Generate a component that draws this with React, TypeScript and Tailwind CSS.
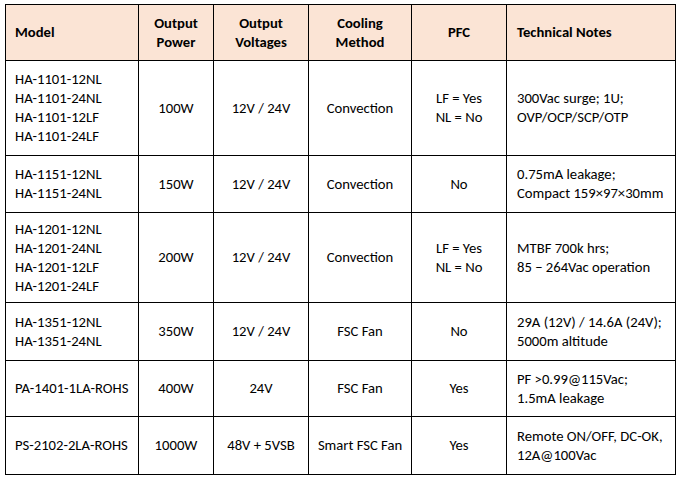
import React from "react";

const header = [
  { lines: ["Model"], align: "left" },
  { lines: ["Output", "Power"], align: "center" },
  { lines: ["Output", "Voltages"], align: "center" },
  { lines: ["Cooling", "Method"], align: "center" },
  { lines: ["PFC"], align: "center" },
  { lines: ["Technical Notes"], align: "left" },
];

const rows: string[][][] = [
  [
    ["HA-1101-12NL", "HA-1101-24NL", "HA-1101-12LF", "HA-1101-24LF"],
    ["100W"],
    ["12V / 24V"],
    ["Convection"],
    ["LF = Yes", "NL = No"],
    ["300Vac surge; 1U;", "OVP/OCP/SCP/OTP"],
  ],
  [
    ["HA-1151-12NL", "HA-1151-24NL"],
    ["150W"],
    ["12V / 24V"],
    ["Convection"],
    ["No"],
    ["0.75mA leakage;", "Compact 159\u00d797\u00d730mm"],
  ],
  [
    ["HA-1201-12NL", "HA-1201-24NL", "HA-1201-12LF", "HA-1201-24LF"],
    ["200W"],
    ["12V / 24V"],
    ["Convection"],
    ["LF = Yes", "NL = No"],
    ["MTBF 700k hrs;", "85 \u2212 264Vac operation"],
  ],
  [
    ["HA-1351-12NL", "HA-1351-24NL"],
    ["350W"],
    ["12V / 24V"],
    ["FSC Fan"],
    ["No"],
    ["29A (12V) / 14.6A (24V);", "5000m altitude"],
  ],
  [
    ["PA-1401-1LA-ROHS"],
    ["400W"],
    ["24V"],
    ["FSC Fan"],
    ["Yes"],
    ["PF >0.99@115Vac;", "1.5mA leakage"],
  ],
  [
    ["PS-2102-2LA-ROHS"],
    ["1000W"],
    ["48V + 5VSB"],
    ["Smart FSC Fan"],
    ["Yes"],
    ["Remote ON/OFF, DC-OK,", "12A@100Vac"],
  ],
];

function cellClass(col: number, isHeader: boolean) {
  const base =
    "border-r border-b border-black flex flex-col justify-center leading-[19px] ";
  const bg = isHeader ? "bg-[#fbe4d5] font-bold " : "bg-white ";
  let align = "items-center text-center ";
  if (col === 0) align = "items-start text-left pl-[9px] ";
  if (col === 5) align = "items-start text-left pl-[10px] ";
  return base + bg + align;
}

export default function App() {
  return (
    <div
      className="w-[681px] h-[480px] bg-white pt-[4px] pl-[5px] text-black"
      style={{ fontFamily: "Carlito, Calibri, Lato, 'Liberation Sans', sans-serif" }}
    >
      <div className="grid w-[671px] grid-cols-[133px_75px_95px_103px_95px_169px] grid-rows-[56px_95px_57px_90px_58px_56px_58px] border-t border-l border-black text-[14.667px]">
        {header.map((h, i) => (
          <div key={"h" + i} className={cellClass(i, true)}>
            {h.lines.map((l, j) => (
              <span key={j} className="whitespace-nowrap">
                {l}
              </span>
            ))}
          </div>
        ))}
        {rows.map((r, ri) =>
          r.map((c, ci) => (
            <div key={ri + "-" + ci} className={cellClass(ci, false)}>
              {c.map((l, j) => (
                <span key={j} className="whitespace-nowrap">
                  {l}
                </span>
              ))}
            </div>
          ))
        )}
      </div>
    </div>
  );
}
